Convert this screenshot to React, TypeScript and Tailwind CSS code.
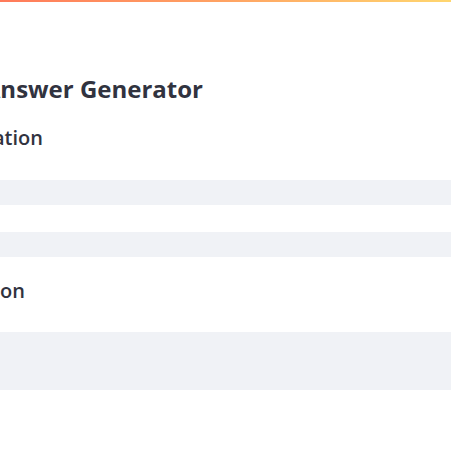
import React from "react";

export default function App() {
  return (
    <div className="relative w-[451px] h-[450px] overflow-hidden bg-white text-[#31333f] font-['Open_Sans','Noto_Sans',sans-serif]">
      <div className="h-[2px] w-full bg-gradient-to-r from-[#ff7a5a] via-[#ffa363] to-[#ffd66f]" />
      <div className="flex flex-col">
        <div className="mt-[72px] flex h-[30px] w-[203px] justify-end overflow-hidden">
          <h1 className="whitespace-nowrap text-[24px] font-bold leading-[30px]">
            Question Answer Generator
          </h1>
        </div>
        <div className="mt-[20px] flex h-[28px] w-[43px] justify-end overflow-hidden">
          <h3 className="whitespace-nowrap text-[20px] font-semibold leading-[28px]">
            Configuration
          </h3>
        </div>
        <div className="ml-[-20px] mt-[28px] w-[500px]">
          <input
            aria-label="Field one"
            className="block h-[25px] w-full rounded-lg bg-[#f0f2f6] outline-none"
          />
        </div>
        <div className="ml-[-20px] mt-[27px] w-[500px]">
          <input
            aria-label="Field two"
            className="block h-[25px] w-full rounded-lg bg-[#f0f2f6] outline-none"
          />
        </div>
        <div className="mt-[20px] flex h-[28px] w-[25px] justify-end overflow-hidden">
          <h3 className="whitespace-nowrap text-[20px] font-semibold leading-[28px]">
            Question
          </h3>
        </div>
        <div className="ml-[-20px] mt-[27px] w-[500px]">
          <textarea
            aria-label="Question text"
            className="block h-[58px] w-full resize-none rounded-lg bg-[#f0f2f6] outline-none"
          />
        </div>
      </div>
    </div>
  );
}
